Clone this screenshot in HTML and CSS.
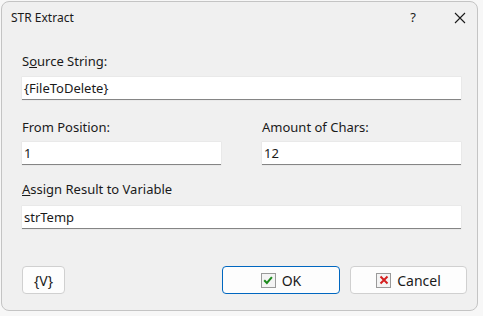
FILE: index.html
```html
<!DOCTYPE html>
<html lang="en">
<head>
<meta charset="UTF-8">
<title>STR Extract</title>
<link rel="stylesheet" href="styles.css">
</head>
<body>

<div class="window">
    <div class="titlebar">
        <div class="title">STR Extract</div>
        <div class="title-buttons">
            <span class="help">?</span>
            <span class="close">
                <svg width="12" height="12" viewBox="0 0 12 12"><path d="M1 1 L11 11 M11 1 L1 11" stroke="#1a1a1a" stroke-width="1.1" fill="none"/></svg>
            </span>
        </div>
    </div>
    <div class="form">
        <div class="field">
            <label>S<u>o</u>urce String:</label>
            <div class="input">{FileToDelete}</div>
        </div>
        <div class="row">
            <div class="field half">
                <label>From Position:</label>
                <div class="input">1</div>
            </div>
            <div class="field half">
                <label>Amount of Chars:</label>
                <div class="input">12</div>
            </div>
        </div>
        <div class="field">
            <label><u>A</u>ssign Result to Variable</label>
            <div class="input">strTemp</div>
        </div>
    </div>
    <div class="buttons">
        <div class="btn btn-var">{V}</div>
        <div class="spacer"></div>
        <div class="btn btn-ok">
            <span class="icon">
                <svg width="10" height="10" viewBox="0 0 10 10"><path d="M1.2 5.2 L3.9 8 L8.9 2.2" stroke="#1d8a1d" stroke-width="2" fill="none"/></svg>
            </span>
            OK
        </div>
        <div class="btn btn-cancel">
            <span class="icon">
                <svg width="10" height="10" viewBox="0 0 10 10"><path d="M1.5 1.5 L8.5 8.5 M8.5 1.5 L1.5 8.5" stroke="#d42020" stroke-width="2" fill="none"/></svg>
            </span>
            Cancel
        </div>
    </div>
</div>

</body>
</html>
```

FILE: styles.css
```css
body {
    margin: 0;
    background: #f7f7f7;
    font-family: "Noto Sans", "Open Sans", sans-serif;
    color: #1a1a1a;
}
.window {
    margin: 1px 0 0 1px;
    width: 475px;
    height: 308px;
    background: #f0f0f0;
    border: 1px solid #c4c4c4;
    border-radius: 8px;
    display: flex;
    flex-direction: column;
}
.titlebar {
    height: 30px;
    display: flex;
    align-items: center;
    justify-content: space-between;
    padding-left: 9px;
}
.title {
    font-size: 12px;
}
.title-buttons {
    display: flex;
    align-items: center;
}
.help {
    font-size: 13px;
    width: 46px;
    text-align: center;
    margin-right: 7px;
}
.close {
    width: 34px;
    display: flex;
    justify-content: center;
    padding-top: 1px;
}
.form {
    padding: 21px 16px 0 20px;
}
.field label {
    display: block;
    font-size: 13px;
    line-height: 16px;
    margin-bottom: 8px;
}
.input {
    height: 22px;
    background: #ffffff;
    border-bottom: 1px solid #858585;
    font-size: 13px;
    line-height: 22px;
    padding-left: 2px;
    box-shadow: 0 0 0 0.5px #e2e2e2;
}
.row {
    display: flex;
    justify-content: space-between;
    margin-top: 19px;
}
.half {
    width: 199px;
}
.row + .field {
    margin-top: 16px;
}
.row .field label {
    margin-bottom: 7px;
}
.form > .field:last-child label {
    margin-bottom: 9px;
}
.buttons {
    display: flex;
    padding: 37px 10px 0 20px;
}
.spacer {
    flex: 1;
}
.btn {
    height: 26px;
    background: #fdfdfd;
    border: 1px solid #d0d0d0;
    border-radius: 4px;
    display: flex;
    align-items: center;
    justify-content: center;
    font-size: 14px;
}
.btn-var {
    width: 41px;
}
.btn-ok {
    width: 116px;
    border-color: #0067c0;
    margin-right: 10px;
}
.btn-cancel {
    width: 115px;
}
.icon {
    width: 13px;
    height: 13px;
    border: 1px solid #9a9a9a;
    background: #f4f4f4;
    display: flex;
    align-items: center;
    justify-content: center;
    margin-right: 6px;
}
```
